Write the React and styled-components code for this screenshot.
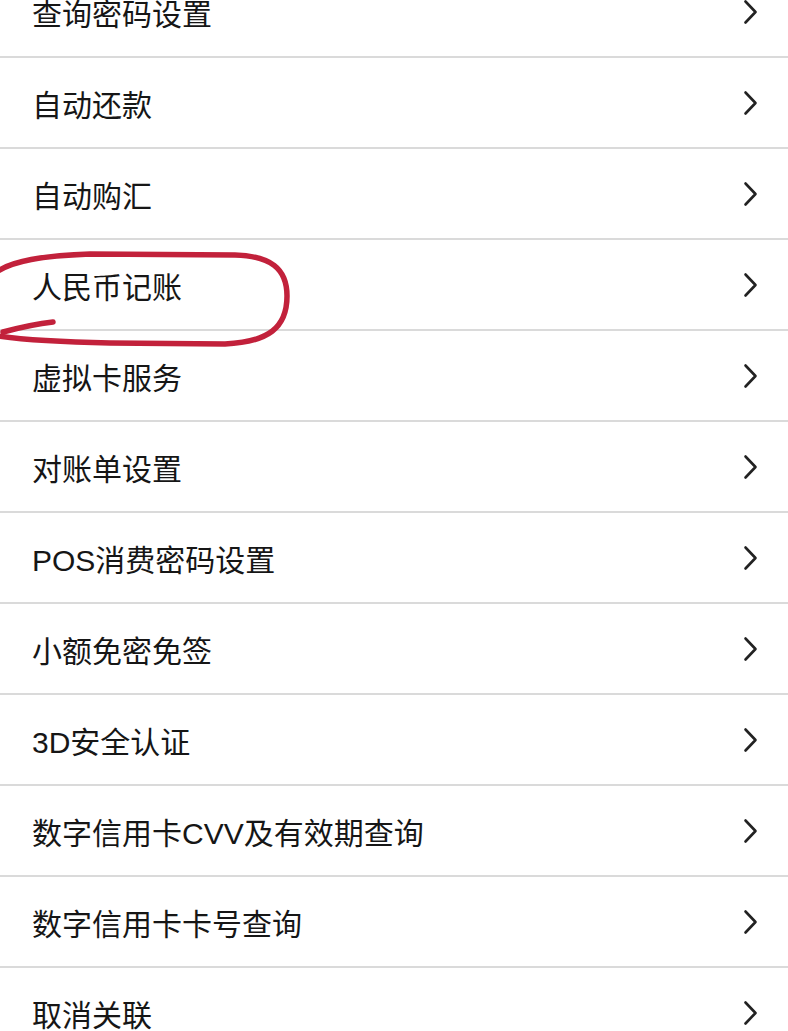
import React from "react";
import styled, { createGlobalStyle } from "styled-components";

const Global = createGlobalStyle`
  html, body { margin: 0; padding: 0; background: #ffffff; }
  body { font-family: "Liberation Sans", "Noto Sans CJK SC", sans-serif; }
`;

const Page = styled.div`
  position: relative;
  width: 788px;
  height: 1031px;
  overflow: hidden;
  background: #ffffff;
  display: flex;
  flex-direction: column;
`;

const List = styled.ul`
  list-style: none;
  margin: -33px 0 0 0;
  padding: 0;
  display: flex;
  flex-direction: column;
`;

const Row = styled.li`
  height: 89px;
  border-bottom: 2px solid #dadada;
  display: flex;
  align-items: center;
  justify-content: space-between;
  padding: 0 30px 0 32px;
  box-sizing: content-box;
`;

const Label = styled.span`
  font-family: "Liberation Sans", "Noto Sans CJK SC", sans-serif;
  font-size: 30px;
  color: #161616;
  letter-spacing: 0;
`;

const Chevron = styled.svg`
  width: 15px;
  height: 26px;
  flex: none;
`;

const Annotation = styled.svg`
  position: absolute;
  left: 0;
  top: 0;
  width: 788px;
  height: 1031px;
  pointer-events: none;
`;

const items = [
  "查询密码设置",
  "自动还款",
  "自动购汇",
  "人民币记账",
  "虚拟卡服务",
  "对账单设置",
  "POS消费密码设置",
  "小额免密免签",
  "3D安全认证",
  "数字信用卡CVV及有效期查询",
  "数字信用卡卡号查询",
  "取消关联",
];

export default function App() {
  return (
    <>
      <Global />
      <Page>
        <List>
          {items.map((t) => (
            <Row key={t}>
              <Label>{t}</Label>
              <Chevron viewBox="0 0 15 26">
                <path
                  d="M2.5 2.5 L12.5 13 L2.5 23.5"
                  fill="none"
                  stroke="#222"
                  strokeWidth="2.6"
                  strokeLinecap="round"
                  strokeLinejoin="round"
                />
              </Chevron>
            </Row>
          ))}
        </List>
        <Annotation viewBox="0 0 788 1031">
          <path
            d="M -2 271 C 14 261, 40 256, 90 254 L 235 255 C 270 256, 287 268, 287 296 C 287 328, 268 342, 225 344 L 110 343 C 60 342, 25 340, -2 336"
            fill="none"
            stroke="#c2213b"
            strokeWidth="5.5"
            strokeLinecap="round"
            strokeLinejoin="round"
          />
          <path
            d="M 3 332 C 18 328, 35 324, 53 322"
            fill="none"
            stroke="#c2213b"
            strokeWidth="5.5"
            strokeLinecap="round"
          />
        </Annotation>
      </Page>
    </>
  );
}
